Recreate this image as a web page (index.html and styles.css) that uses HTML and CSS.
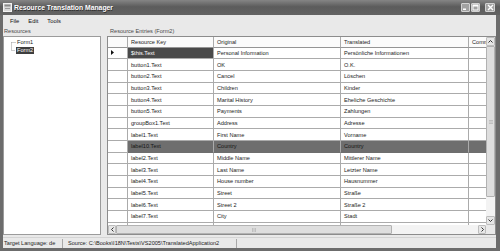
FILE: index.html
```html
<!DOCTYPE html>
<html lang="en">
<head>
  <meta charset="UTF-8">
  <title>Resource Translation Manager</title>
  <link rel="stylesheet" href="styles.css">
</head>
<body>
<div class="window">
  <div class="titlebar">
    <svg class="app-icon" width="9" height="9" viewBox="0 0 9 9">
      <rect x="0.5" y="0.5" width="8" height="8" fill="#d8d8d8" stroke="#f2f2f2"/>
      <rect x="1.5" y="1.5" width="6" height="2" fill="#8a8a8a"/>
      <rect x="2" y="5" width="5" height="1" fill="#9a9a9a"/>
    </svg>
    <span class="title">Resource Translation Manager</span>
    <div class="caption-buttons">
      <span class="cbtn">
        <svg width="7" height="7" viewBox="0 0 7 7"><rect x="1" y="4.5" width="3" height="1.5" fill="#fff"/></svg>
      </span>
      <span class="cbtn">
        <svg width="7" height="7" viewBox="0 0 7 7"><rect x="1" y="1" width="5" height="5" fill="none" stroke="#fff"/><rect x="1" y="1" width="5" height="1.5" fill="#fff"/></svg>
      </span>
      <span class="cbtn close">
        <svg width="7" height="7" viewBox="0 0 7 7"><path d="M1 1L6 6M6 1L1 6" stroke="#fff" stroke-width="1.4"/></svg>
      </span>
    </div>
  </div>

  <div class="frame">
    <div class="menubar">
      <span>File</span>
      <span>Edit</span>
      <span>Tools</span>
    </div>

    <div class="main">
      <div class="pane left">
        <div class="caption">Resources</div>
        <div class="tree">
          <svg class="tree-lines" width="5" height="13" viewBox="0 0 5 13">
            <path d="M0.5 3.5V11.5M0.5 3.5H5M0.5 11.5H4" stroke="#9a9a9a" stroke-dasharray="1 1" fill="none"/>
          </svg>
          <div class="nodes">
            <div class="node">Form1</div>
            <div class="node active">Form2</div>
          </div>
        </div>
      </div>

      <div class="pane right">
        <div class="caption">Resource Entries (Form2)</div>
        <div class="grid">
          <div class="grid-main">
            <div class="cells">
              <div class="row head"><div class="rh"></div><div>Resource Key</div><div>Original</div><div>Translated</div><div>Comments</div></div>
              <div class="row"><div class="rh"><svg width="3" height="5" viewBox="0 0 3 5"><path d="M0 0L3 2.5L0 5Z" fill="#111"/></svg></div><div class="current">$this.Text</div><div>Personal Information</div><div>Persönliche Informationen</div><div></div></div>
              <div class="row"><div class="rh"></div><div>button1.Text</div><div>OK</div><div>O.K.</div><div></div></div>
              <div class="row"><div class="rh"></div><div>button2.Text</div><div>Cancel</div><div>Löschen</div><div></div></div>
              <div class="row"><div class="rh"></div><div>button3.Text</div><div>Children</div><div>Kinder</div><div></div></div>
              <div class="row"><div class="rh"></div><div>button4.Text</div><div>Marital History</div><div>Eheliche Geschichte</div><div></div></div>
              <div class="row"><div class="rh"></div><div>button5.Text</div><div>Payments</div><div>Zahlungen</div><div></div></div>
              <div class="row"><div class="rh"></div><div>groupBox1.Text</div><div>Address</div><div>Adresse</div><div></div></div>
              <div class="row"><div class="rh"></div><div>label1.Text</div><div>First Name</div><div>Vorname</div><div></div></div>
              <div class="row selected"><div class="rh"></div><div>label10.Text</div><div>Country</div><div>Country</div><div></div></div>
              <div class="row"><div class="rh"></div><div>label2.Text</div><div>Middle Name</div><div>Mittlerer Name</div><div></div></div>
              <div class="row"><div class="rh"></div><div>label3.Text</div><div>Last Name</div><div>Letzter Name</div><div></div></div>
              <div class="row"><div class="rh"></div><div>label4.Text</div><div>House number</div><div>Hausnummer</div><div></div></div>
              <div class="row"><div class="rh"></div><div>label5.Text</div><div>Street</div><div>Straße</div><div></div></div>
              <div class="row"><div class="rh"></div><div>label6.Text</div><div>Street 2</div><div>Straße 2</div><div></div></div>
              <div class="row"><div class="rh"></div><div>label7.Text</div><div>City</div><div>Stadt</div><div></div></div>
              <div class="row"><div class="rh"></div><div></div><div></div><div></div><div></div></div>
            </div>
            <div class="vscroll">
              <div class="sb-btn"><svg width="5" height="3" viewBox="0 0 5 3"><path d="M0.5 2.5L2.5 0.5L4.5 2.5" stroke="#333" fill="none"/></svg></div>
              <div class="vthumb"><svg width="4" height="4" viewBox="0 0 4 4"><path d="M0 0.5H4M0 2H4M0 3.5H4" stroke="#aaa" stroke-width="0.6"/></svg></div>
              <div class="track"></div>
              <div class="sb-btn"><svg width="5" height="3" viewBox="0 0 5 3"><path d="M0.5 0.5L2.5 2.5L4.5 0.5" stroke="#333" fill="none"/></svg></div>
            </div>
          </div>
          <div class="hscroll">
            <div class="sb-btn"><svg width="3" height="5" viewBox="0 0 3 5"><path d="M2.5 0.5L0.5 2.5L2.5 4.5" stroke="#333" fill="none"/></svg></div>
            <div class="hthumb"><svg width="4" height="4" viewBox="0 0 4 4"><path d="M0.5 0V4M2 0V4M3.5 0V4" stroke="#aaa" stroke-width="0.6"/></svg></div>
            <div class="track"></div>
            <div class="sb-btn"><svg width="3" height="5" viewBox="0 0 3 5"><path d="M0.5 0.5L2.5 2.5L0.5 4.5" stroke="#333" fill="none"/></svg></div>
            <div class="corner"></div>
          </div>
        </div>
      </div>
    </div>

    <div class="statusbar">
      <div class="panel lang">Target Language: de</div>
      <div class="panel source">Source: C:\Books\I18N\Tests\VS2005\TranslatedApplication2</div>
      <div class="panel rest"></div>
    </div>
  </div>
</div>
</body>
</html>
```

FILE: styles.css
```css
* {
  margin: 0;
  padding: 0;
  box-sizing: border-box;
}
body {
  width: 500px;
  height: 251px;
  overflow: hidden;
  font-family: "Liberation Sans", Arial, sans-serif;
  font-size: 5.6px;
  color: #1c1c1c;
  background: #6a6a6a;
}
.window {
  display: flex;
  flex-direction: column;
  height: 251px;
}
.titlebar {
  flex-shrink: 0;
  height: 15px;
  display: flex;
  align-items: center;
  padding: 0 5px 0 3px;
  background: linear-gradient(#858585, #5c5c5c 45%, #636363);
  color: #fff;
}
.title {
  font-weight: bold;
  font-size: 6.8px;
  margin-left: 2px;
  text-shadow: 0.5px 0.5px 0 #2e2e2e;
}
.caption-buttons {
  margin-left: auto;
  display: flex;
  gap: 1px;
}
.cbtn {
  width: 9px;
  height: 9px;
  border: 1px solid #d2d2d2;
  border-radius: 1px;
  background: #a2a2a2;
  display: flex;
  align-items: center;
  justify-content: center;
}
.cbtn.close {
  width: 10px;
  margin-left: 4px;
}
.frame {
  flex: 1;
  min-height: 0;
  display: flex;
  flex-direction: column;
  background: #e9e9e9;
  border: solid #6c6c6c;
  border-width: 0 4px 3px 3px;
}
.menubar {
  flex-shrink: 0;
  height: 12px;
  display: flex;
  align-items: center;
  gap: 9px;
  padding-left: 7px;
  font-size: 5.8px;
  color: #111;
}
.main {
  flex: 1;
  display: flex;
  gap: 6px;
  padding-bottom: 2px;
  min-height: 0;
}
.pane {
  display: flex;
  flex-direction: column;
  min-height: 0;
}
.left {
  width: 98px;
}
.right {
  flex: 1;
  min-width: 0;
}
.caption {
  flex-shrink: 0;
  height: 9px;
  line-height: 9px;
  padding-left: 1px;
  color: #4a4a4a;
}
.right .caption {
  padding-left: 3px;
}

.tree {
  flex: 1;
  background: #fff;
  border: 1px solid #9b9b9b;
  padding: 2px 0 0 7px;
  display: flex;
  align-items: flex-start;
}
.nodes {
  display: flex;
  flex-direction: column;
  align-items: flex-start;
  gap: 1px;
}
.node {
  height: 7px;
  line-height: 7px;
  padding: 0 1px;
  color: #1e1e1e;
}
.node.active {
  background: #3e3e3e;
  color: #fff;
}

.grid {
  flex: 1;
  min-height: 0;
  display: flex;
  flex-direction: column;
  background: #fff;
  border: 1px solid #8c8c8c;
}
.grid-main {
  flex: 1;
  min-height: 0;
  display: flex;
}
.cells {
  flex: 1;
  min-width: 0;
  overflow: hidden;
}
.row {
  display: grid;
  grid-template-columns: 20px 86px 127px 128px 60px;
  height: 11.7px;
}
.row > div {
  display: flex;
  align-items: center;
  padding-left: 3px;
  white-space: nowrap;
  overflow: hidden;
  border-right: 1px solid #ababab;
  border-bottom: 1px solid #ababab;
}
.row.head {
  height: 10.5px;
}
.row.head > div {
  background: #fbfbfb;
  border-bottom-color: #959595;
}
.row > .current {
  background: #4a4a4a;
  color: #fff;
}
.row.selected > div:not(.rh) {
  background: #6e6e6e;
  color: #151515;
  border-bottom-color: #6e6e6e;
}

.vscroll {
  flex-shrink: 0;
  width: 9px;
  display: flex;
  flex-direction: column;
  background: #f3f3f3;
}
.sb-btn {
  flex-shrink: 0;
  width: 9px;
  height: 9px;
  display: flex;
  align-items: center;
  justify-content: center;
  background: #e6e6e6;
  border: 1px solid #bdbdbd;
  border-radius: 1px;
}
.vthumb {
  flex-shrink: 0;
  height: 151px;
  display: flex;
  align-items: center;
  justify-content: center;
  background: #dedede;
  border: 1px solid #b2b2b2;
  border-radius: 1px;
}
.track {
  flex: 1;
}
.hscroll {
  flex-shrink: 0;
  height: 9px;
  display: flex;
  background: #f3f3f3;
}
.hscroll .sb-btn {
  width: 8px;
}
.hthumb {
  flex-shrink: 0;
  width: 276px;
  display: flex;
  align-items: center;
  justify-content: center;
  background: #dedede;
  border: 1px solid #b2b2b2;
  border-radius: 1px;
}
.corner {
  width: 9px;
  background: #e9e9e9;
}

.statusbar {
  flex-shrink: 0;
  height: 11px;
  display: flex;
  align-items: center;
  border-top: 1px solid #d4d4d4;
}
.panel {
  height: 9px;
  line-height: 9px;
  white-space: nowrap;
  border-right: 1px solid #a8a8a8;
}
.lang {
  width: 60px;
  padding-left: 1px;
}
.source {
  width: 174px;
  padding-left: 5px;
}
.rest {
  flex: 1;
  border-right: 0;
}
```
